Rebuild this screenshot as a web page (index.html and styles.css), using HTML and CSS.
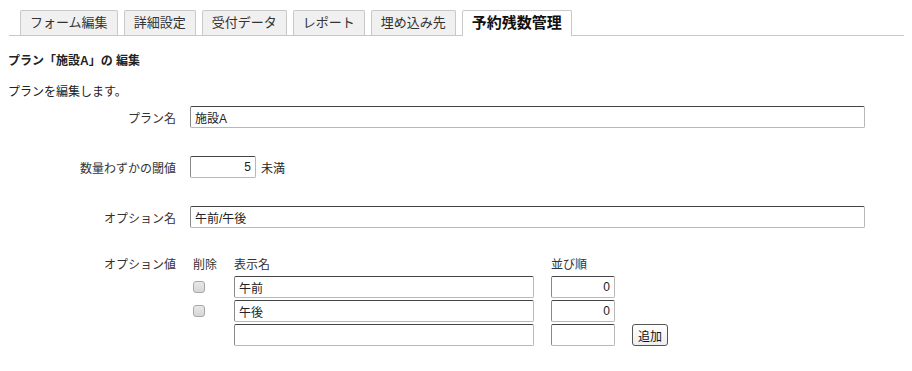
FILE: index.html
```html
<!DOCTYPE html>
<html lang="ja">
<head>
  <meta charset="UTF-8">
  <title>予約残数管理</title>
  <link rel="stylesheet" href="styles.css">
</head>
<body>
  <ul class="tabs">
    <li class="tab">フォーム編集</li>
    <li class="tab">詳細設定</li>
    <li class="tab">受付データ</li>
    <li class="tab">レポート</li>
    <li class="tab">埋め込み先</li>
    <li class="tab active">予約残数管理</li>
  </ul>

  <h3 class="page-title">プラン「施設A」の 編集</h3>
  <p class="page-desc">プランを編集します。</p>

  <form class="plan-form">
    <div class="form-row">
      <label for="plan-name">プラン名</label>
      <div class="field"><input type="text" id="plan-name" class="input wide" value="施設A"></div>
    </div>
    <div class="form-row">
      <label for="threshold">数量わずかの閾値</label>
      <div class="field">
        <input type="text" id="threshold" class="input num small" value="5">
        <span class="unit">未満</span>
      </div>
    </div>
    <div class="form-row">
      <label for="option-name">オプション名</label>
      <div class="field"><input type="text" id="option-name" class="input wide" value="午前/午後"></div>
    </div>
    <div class="form-row option-row">
      <label>オプション値</label>
      <div class="option-grid">
        <div class="col-head">削除</div>
        <div class="col-head">表示名</div>
        <div class="col-head">並び順</div>
        <div></div>

        <div class="cell-check"><input type="checkbox" class="check"></div>
        <input type="text" class="input name" value="午前">
        <input type="text" class="input num order" value="0">
        <div></div>

        <div class="cell-check"><input type="checkbox" class="check"></div>
        <input type="text" class="input name" value="午後">
        <input type="text" class="input num order" value="0">
        <div></div>

        <div></div>
        <input type="text" class="input name" value="">
        <input type="text" class="input num order" value="">
        <div><button type="button" class="btn">追加</button></div>
      </div>
    </div>
  </form>
</body>
</html>
```

FILE: styles.css
```css
:root {
  --text-color: #222;
  --tab-border: #c8c8c8;
  --tab-bg: #f0f0f0;
  --font-family: "Liberation Sans", "Noto Sans CJK JP", sans-serif;
}
* {
  box-sizing: border-box;
}
body {
  margin: 8px;
  font-family: var(--font-family);
  font-size: 12px;
  color: var(--text-color);
  background: #fff;
}
.tabs {
  display: flex;
  gap: 6px;
  list-style: none;
  margin: 2px 0 0 1px;
  padding: 0 0 0 11px;
  border-bottom: 1px solid var(--tab-border);
}
.tab {
  height: 25px;
  line-height: 23px;
  padding: 0 9px;
  font-size: 13px;
  color: #333;
  background: var(--tab-bg);
  border: 1px solid var(--tab-border);
  border-bottom: none;
  border-radius: 2px 2px 0 0;
}
.tab.active {
  background: #fff;
  font-weight: bold;
  font-size: 15px;
  color: #111;
  margin-bottom: -1px;
  height: 26px;
}
.page-title {
  margin: 17px 0 0;
  font-size: 12px;
  line-height: 16px;
  font-weight: bold;
}
.page-desc {
  margin: 15px 0 6px;
  line-height: 16px;
}
.form-row {
  display: grid;
  grid-template-columns: 168px 1fr;
  column-gap: 14px;
  align-items: center;
  min-height: 22px;
  margin-bottom: 28px;
}
.form-row label {
  text-align: right;
  color: #333;
}
.field {
  display: flex;
  align-items: center;
  gap: 5px;
}
.input {
  height: 22px;
  padding: 0 4px;
  font-family: var(--font-family);
  font-size: 12px;
  color: var(--text-color);
  background: #fff;
  border: 1px solid #b8b8b8;
  border-top-color: #444;
  border-left-color: #888;
  border-radius: 2px;
  outline: none;
}
.input.wide {
  width: 675px;
}
.input.small {
  width: 66px;
}
.input.num {
  text-align: right;
}
.option-row {
  align-items: start;
}
.option-row label {
  line-height: 18px;
}
.option-grid {
  display: grid;
  grid-template-columns: 27px 300px 64px auto;
  column-gap: 17px;
  row-gap: 2px;
  align-items: center;
}
.option-grid .col-head {
  height: 18px;
  line-height: 18px;
  color: #333;
  white-space: nowrap;
}
.option-grid .col-head:first-child {
  padding-left: 3px;
}
.cell-check {
  padding-left: 3px;
}
.check {
  appearance: none;
  display: block;
  margin: 0;
  width: 12px;
  height: 12px;
  border: 1px solid #a8a8a8;
  border-radius: 3px;
  background: linear-gradient(#e8e8e8, #d6d6d6);
}
.input.name {
  width: 300px;
}
.input.order {
  width: 64px;
}
.btn {
  height: 22px;
  padding: 0 5px;
  font-family: var(--font-family);
  font-size: 12px;
  color: #111;
  background: linear-gradient(#fff, #eee);
  border: 1px solid #555;
  border-radius: 3px;
}
```
